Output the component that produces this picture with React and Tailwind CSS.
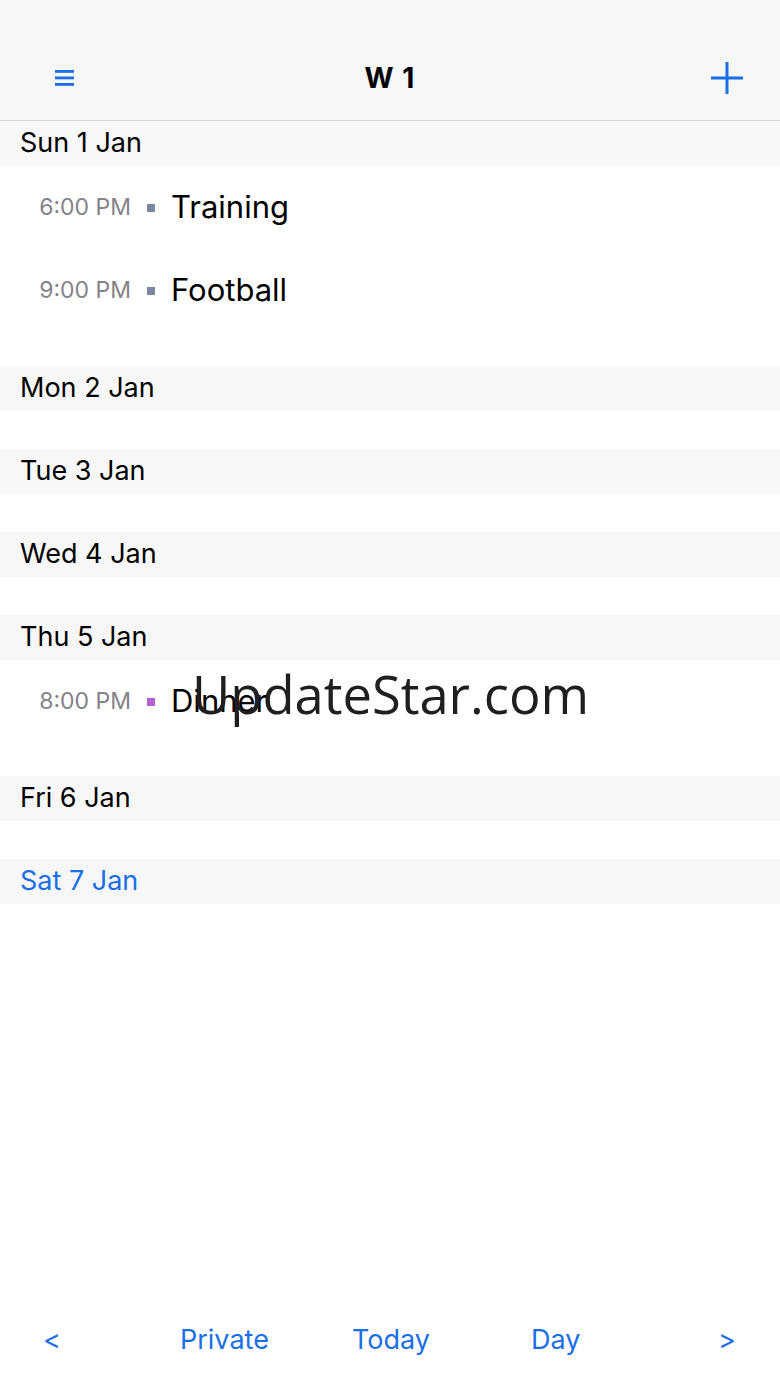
import React from "react";

const font = { fontFamily: "Inter, 'Noto Sans', sans-serif" };

function DayHeader({ label, blue }) {
  return (
    <div className={`h-[45px] bg-[#f7f7f7] flex items-center pl-5 text-[27px] ${blue ? "text-[#1a6ee6]" : "text-black"}`}>
      {label}
    </div>
  );
}

function Event({ time, title, color }) {
  return (
    <div className="h-[83px] flex items-center">
      <div className="w-[131px] text-right text-[23px] text-[#838388]">{time}</div>
      <div className={`w-[8px] h-[8px] ml-[16px] ${color}`}></div>
      <div className="ml-[16px] text-[31px] text-black">{title}</div>
    </div>
  );
}

export default function App() {
  return (
    <div className="relative w-[780px] h-[1387px] bg-white flex flex-col" style={font}>
      <div className="h-[121px] bg-[#f7f7f7] border-b border-[#d4d4d4] flex items-end pb-[24px] px-[50px] relative">
        <div className="flex-1 flex items-center h-[36px]">
          <svg width="24" height="22" viewBox="0 0 24 22" className="ml-[2px]">
            <rect x="3" y="3" width="19" height="2.8" fill="#1a6ee6" />
            <rect x="3" y="9.5" width="19" height="2.8" fill="#1a6ee6" />
            <rect x="3" y="16" width="19" height="2.8" fill="#1a6ee6" />
          </svg>
        </div>
        <div className="absolute left-0 right-0 bottom-[24px] flex justify-center h-[36px] items-center pointer-events-none">
          <span className="text-[28px] font-bold text-black tracking-[1px]">W 1</span>
        </div>
        <div className="flex items-center h-[36px] -mr-[14px]">
          <svg width="34" height="34" viewBox="0 0 34 34">
            <rect x="15.5" y="1" width="3" height="32" fill="#1a6ee6" />
            <rect x="1" y="15.5" width="32" height="3" fill="#1a6ee6" />
          </svg>
        </div>
      </div>

      <DayHeader label="Sun 1 Jan" />
      <div className="pb-[34px]">
        <Event time="6:00 PM" title="Training" color="bg-[#7a87a3]" />
        <Event time="9:00 PM" title="Football" color="bg-[#7a87a3]" />
      </div>
      <DayHeader label="Mon 2 Jan" />
      <div className="h-[38px]"></div>
      <DayHeader label="Tue 3 Jan" />
      <div className="h-[38px]"></div>
      <DayHeader label="Wed 4 Jan" />
      <div className="h-[38px]"></div>
      <DayHeader label="Thu 5 Jan" />
      <div className="pb-[33px]">
        <Event time="8:00 PM" title="Dinner" color="bg-[#b660d8]" />
      </div>
      <DayHeader label="Fri 6 Jan" />
      <div className="h-[38px]"></div>
      <DayHeader label="Sat 7 Jan" blue />

      <div className="flex-1"></div>

      <div className="h-[94px] pb-[0px] flex items-center text-[#1a6ee6] text-[27px] relative">
        <span className="absolute left-[43px]">&lt;</span>
        <span className="absolute left-[180px]">Private</span>
        <span className="absolute left-[352px]">Today</span>
        <span className="absolute left-[531px]">Day</span>
        <span className="absolute left-[718px]">&gt;</span>
      </div>

      <div
        className="absolute left-[192px] top-[668px] text-[52.5px] text-[#1f1f1f] leading-none"
        style={{ fontFamily: "'Open Sans', 'Noto Sans', sans-serif" }}
      >
        UpdateStar.com
      </div>
    </div>
  );
}
